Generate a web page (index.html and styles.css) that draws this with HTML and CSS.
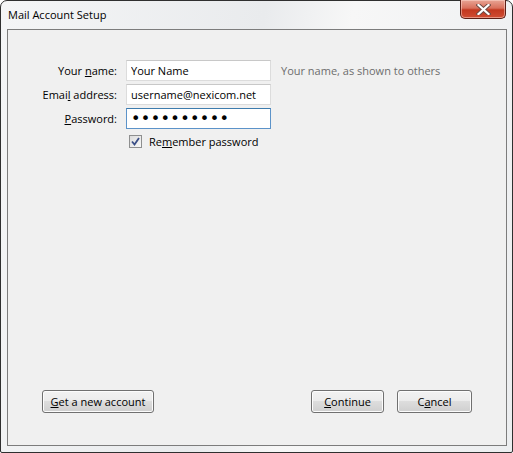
FILE: index.html
```html
<!DOCTYPE html>
<html lang="en">
<head>
    <meta charset="UTF-8">
    <meta name="viewport" content="width=device-width, initial-scale=1.0">
    <title>Mail Account Setup</title>
    <link rel="stylesheet" href="styles.css">
</head>
<body>
    <div class="window">
        <div class="titlebar">
            <span class="title">Mail Account Setup</span>
            <button class="close-btn" aria-label="Close">
                <svg width="15" height="11" viewBox="0 0 15 11">
                    <path d="M2.5 1 L12.5 10 M12.5 1 L2.5 10" stroke="#6b4a44" stroke-width="4" stroke-linecap="square"/>
                    <path d="M2.5 1 L12.5 10 M12.5 1 L2.5 10" stroke="#ffffff" stroke-width="2.2" stroke-linecap="square"/>
                </svg>
            </button>
        </div>

        <div class="client">
            <div class="form">
                <label class="label" for="name">Your <u>n</u>ame:</label>
                <input class="field" id="name" type="text" value="Your Name">
                <span class="hint">Your name, as shown to others</span>

                <label class="label" for="email">Emai<u>l</u> address:</label>
                <input class="field" id="email" type="text" value="username@nexicom.net">
                <span></span>

                <label class="label" for="password"><u>P</u>assword:</label>
                <input class="field focused" id="password" type="password" value="secretpass">
                <span></span>

                <span></span>
                <label class="remember">
                    <span class="checkbox">
                        <svg width="9" height="9" viewBox="0 0 9 9">
                            <path d="M1 4.5 L3.5 7.5 L8 1" fill="none" stroke="#3b4f87" stroke-width="1.8"/>
                        </svg>
                    </span>
                    <span>Re<u>m</u>ember password</span>
                </label>
                <span></span>
            </div>

            <div class="buttons">
                <button class="btn wide"><u>G</u>et a new account</button>
                <div class="right">
                    <button class="btn"><u>C</u>ontinue</button>
                    <button class="btn">C<u>a</u>ncel</button>
                </div>
            </div>
        </div>
    </div>
</body>
</html>
```

FILE: styles.css
```css
/* window frame */
body, html {
    margin: 0;
    height: 100%;
}

body {
    font-family: "Open Sans", "Noto Sans", sans-serif;
    font-size: 11px;
    color: #000;
    background: #fff;
}

.window {
    box-sizing: border-box;
    width: 513px;
    height: 453px;
    display: flex;
    flex-direction: column;
    border: 1px solid #2f2f2f;
    border-radius: 7px 7px 2px 2px;
    background: linear-gradient(100deg, #f4f5f6 0%, #e9ebed 45%, #f7f7f7 60%, #eceef0 100%);
}

.titlebar {
    height: 28px;
    display: flex;
    justify-content: space-between;
    align-items: flex-start;
    padding: 0 6px 0 7px;
}

.title {
    margin-top: 6px;
}

.close-btn {
    width: 46px;
    height: 19px;
    margin-top: -1px;
    padding: 0;
    display: flex;
    align-items: center;
    justify-content: center;
    border: 1px solid #5c1f16;
    border-top: none;
    border-radius: 0 0 5px 5px;
    background: linear-gradient(#e8a595 0%, #d9705c 45%, #c2381f 55%, #d04d33 100%);
    box-shadow: inset 0 0 0 1px rgba(255, 220, 210, 0.5);
}

/* client area */
.client {
    flex: 1;
    display: flex;
    flex-direction: column;
    justify-content: space-between;
    margin: 0 5px 6px 6px;
    border: 1px solid #7c7c7c;
    background: #f0f0f0;
}

.form {
    display: grid;
    grid-template-columns: 109px 145px auto;
    column-gap: 9px;
    row-gap: 3px;
    align-items: center;
    padding-top: 30px;
}

.label {
    text-align: right;
}

.field {
    box-sizing: border-box;
    height: 21px;
    margin: 0;
    padding: 0 4px;
    font-family: inherit;
    font-size: 11px;
    color: #000;
    border: 1px solid #dcdcdc;
    border-top-color: #c8c8c8;
    background: #fff;
    outline: none;
}

.field.focused {
    border-color: #5c93c9;
    border-top-color: #3d7bad;
    font-family: "DejaVu Sans", sans-serif;
    font-size: 16px;
    letter-spacing: 0.4px;
}

.hint {
    color: #6d6d6d;
    padding-left: 1px;
}

.remember {
    display: flex;
    align-items: center;
    gap: 7px;
    margin-top: 2px;
    padding-left: 3px;
}

.checkbox {
    box-sizing: border-box;
    width: 13px;
    height: 13px;
    display: flex;
    align-items: center;
    justify-content: center;
    border: 1px solid #8e8f8f;
    background: linear-gradient(135deg, #dcdcdc, #f8f8f8);
}

/* bottom buttons */
.buttons {
    display: flex;
    justify-content: space-between;
    padding: 0 34px 32px 34px;
}

.right {
    display: flex;
    gap: 13px;
}

.btn {
    box-sizing: border-box;
    width: 73px;
    height: 23px;
    padding: 0;
    font-family: inherit;
    font-size: 11px;
    color: #000;
    border: 1px solid #707070;
    border-radius: 3px;
    background: linear-gradient(#f2f2f2 0%, #ebebeb 50%, #dddddd 50%, #cfcfcf 100%);
    box-shadow: inset 0 0 0 1px #fcfcfc;
}

.btn:last-child {
    width: 75px;
}

.btn.wide {
    width: 112px;
}
```
